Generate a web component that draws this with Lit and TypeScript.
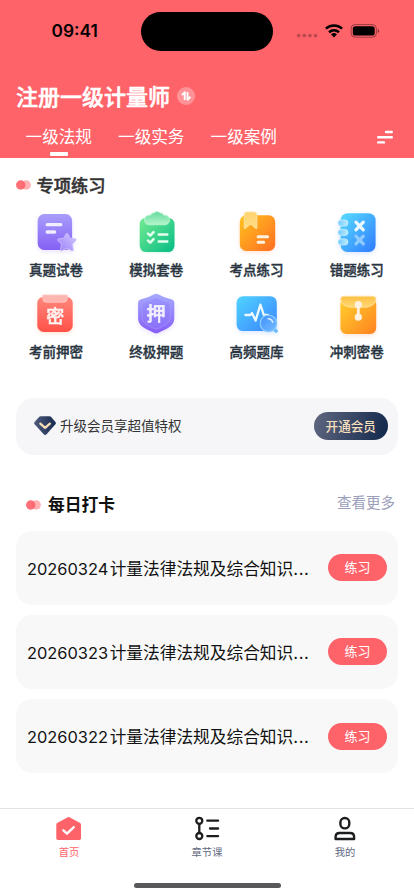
import { LitElement, html, svg, css } from "lit";
import { customElement } from "lit/decorators.js";

const purpleDoc = svg`
  <defs>
    <linearGradient id="a" x1="0" y1="0" x2="0" y2="1"><stop offset="0" stop-color="#a99efb"/><stop offset="1" stop-color="#8560f4"/></linearGradient>
    <linearGradient id="b" x1="1" y1="0" x2="0" y2="1"><stop offset="0" stop-color="#d2c9ff"/><stop offset="1" stop-color="#9c80f8"/></linearGradient>
  </defs>
  <rect x="6.7" y="7" width="34.4" height="36" rx="6.5" fill="url(#a)"/>
  <path d="M16.2 17.7H29.8M16.2 25H23.6" stroke="#f0edff" stroke-width="3.3" stroke-linecap="round"/>
  <path d="M35.4 26.4Q36 25.6 36.6 26.4L39.1 31.2L44.6 32.1Q45.5 32.5 44.9 33.2L41.2 37.2L42.2 42.9Q42.1 44 41.1 43.7L35.9 41.3L30.6 43.6Q29.6 43.9 29.6 42.8L30.5 37.2L26.7 33.2Q26.2 32.3 27.2 32L32.7 31.2Z" fill="url(#b)" stroke="#c5b9ff" stroke-width="1" stroke-linejoin="round"/>`;

const greenList = svg`
  <defs>
    <linearGradient id="a" x1="0" y1="0" x2="1" y2="1"><stop offset="0" stop-color="#76eb92"/><stop offset="1" stop-color="#04bc85"/></linearGradient>
    <linearGradient id="b" x1="0" y1="0" x2="0" y2="1"><stop offset="0" stop-color="#63d99d"/><stop offset="1" stop-color="#b6f6cb"/></linearGradient>
  </defs>
  <rect x="8.7" y="10.7" width="34.8" height="34.4" rx="6.5" fill="url(#a)"/>
  <path d="M18.2 8.2H19.6C20.5 5.8 23 6.2 23.6 5.6C24.6 4.3 27.6 4.3 28.6 5.6C29.3 6.3 31.5 5.8 32.6 8.2H33.8A4.8 4.8 0 0 1 33.8 17.8H18.2A4.8 4.8 0 0 1 18.2 8.2Z" fill="url(#b)" stroke="#b9f6cf" stroke-width=".8"/>
  <g stroke="#e4fff0" stroke-width="2.5" stroke-linecap="round" stroke-linejoin="round" fill="none">
    <path d="M17 26.7L19.2 28.7L22.6 25.2M17 33.6L19.2 35.6L22.6 32.1"/><path d="M27.7 27.4H36.3M27.7 34.4H36.3"/>
  </g>`;

const orangeBook = svg`
  <defs>
    <linearGradient id="a" x1="0" y1="0" x2="1" y2="1"><stop offset="0" stop-color="#ffc41e"/><stop offset="1" stop-color="#ff6d23"/></linearGradient>
    <linearGradient id="b" x1="0" y1="0" x2="0" y2="1"><stop offset="0" stop-color="#ffd36f"/><stop offset="1" stop-color="#ffdd87"/></linearGradient>
  </defs>
  <rect x="7.8" y="8.3" width="35.4" height="35.7" rx="6.5" fill="url(#a)"/>
  <path d="M12.2 21V7.7Q12.2 5 15 5H22.2Q24.9 5 24.9 7.7V21Q24.8 22 24 21.5L19.2 17.6Q18.6 17.2 18 17.6L13.1 21.6Q12.3 22 12.2 21Z" fill="url(#b)" stroke="#ffe6a6" stroke-width=".8"/>
  <path d="M26.1 29.7H35.6M26.1 35.2H31.7" stroke="#fff2e2" stroke-width="3" stroke-linecap="round"/>`;

const blueNotebook = svg`
  <defs>
    <linearGradient id="a" x1="0" y1="0" x2="1" y2="1"><stop offset="0" stop-color="#57dcff"/><stop offset="1" stop-color="#307bff"/></linearGradient>
    <linearGradient id="b" x1="0" y1="0" x2="1" y2="0"><stop offset="0" stop-color="#76c9ff"/><stop offset="1" stop-color="#b9ebff"/></linearGradient>
  </defs>
  <rect x="8.6" y="6.2" width="35" height="38.8" rx="7" fill="url(#a)"/>
  <g fill="url(#b)" stroke="#c6efff" stroke-width=".8">
    <rect x="6" y="13" width="10" height="6" rx="3"/><rect x="6" y="22.4" width="10" height="6" rx="3"/><rect x="6" y="31.9" width="10" height="6" rx="3"/>
  </g>
  <path d="M23.9 15.2L31.3 22.9M31.3 15.2L23.9 22.9" stroke="#ecf9ff" stroke-width="3.2" stroke-linecap="round"/>
  <path d="M23.9 29.2L31.3 36.9M31.3 29.2L23.9 36.9" stroke="#90cbff" stroke-width="3.2" stroke-linecap="round"/>`;

const redSecret = svg`
  <defs>
    <linearGradient id="a" x1="0" y1="0" x2="0" y2="1"><stop offset="0" stop-color="#ff877c"/><stop offset="1" stop-color="#ff5147"/></linearGradient>
  </defs>
  <rect x="6.3" y="7.7" width="35.4" height="35.3" rx="6.5" fill="url(#a)"/>
  <path d="M11.7 6H36.3V9.4Q36.3 13.3 32.4 13.3H15.6Q11.7 13.3 11.7 9.4Z" fill="#ffb6b0" stroke="#ffcac5" stroke-width=".7"/>
  <text x="24.2" y="34" class="glyph">密</text>`;

const purpleShield = svg`
  <defs>
    <linearGradient id="a" x1="0" y1="0" x2="0" y2="1"><stop offset="0" stop-color="#a5aaff"/><stop offset="1" stop-color="#865df8"/></linearGradient>
  </defs>
  <path d="M23.2 5.3Q25.2 4.2 27.2 5.3Q33.5 9 40 10.3Q43.3 11 43.3 14.2V29.5C43.3 37.5 34 40.5 27.5 43.7Q25.2 44.8 22.9 43.7C16.4 40.5 7.1 37.5 7.1 29.5V14.2Q7.1 11 10.4 10.3Q16.9 9 23.2 5.3Z" fill="url(#a)"/>
  <path d="M24 9.1Q25.2 8.4 26.4 9.1Q32 12.3 37.3 13.3Q39.3 13.7 39.3 15.7V28.7C39.3 34.5 32 37 26.5 39.8Q25.2 40.4 23.9 39.8C18.4 37 11.1 34.5 11.1 28.7V15.7Q11.1 13.7 13.1 13.3Q18.4 12.3 24 9.1Z" fill="#8f7ff8" fill-opacity=".4" stroke="#b3acff" stroke-opacity=".6" stroke-width=".7"/>
  <text x="24.9" y="31.8" class="glyph big">押</text>`;

const bluePulse = svg`
  <defs>
    <linearGradient id="a" x1="0" y1="0" x2="1" y2="1"><stop offset="0" stop-color="#50d4ff"/><stop offset="1" stop-color="#3a83ff"/></linearGradient>
    <linearGradient id="b" x1="0" y1="0" x2="1" y2="1"><stop offset="0" stop-color="#3e91fc"/><stop offset="1" stop-color="#76bbff"/></linearGradient>
  </defs>
  <rect x="4.6" y="7.2" width="40.2" height="34.9" rx="6.5" fill="url(#a)"/>
  <path d="M13.4 26H17.5Q19 26 20 24.1L23.6 31.6L28.4 15.6L31.8 26H36" stroke="#ecf9ff" stroke-width="2.3" fill="none" stroke-linecap="round" stroke-linejoin="round"/>
  <path d="M41.7 39.7L44 41.9" stroke="#6bbcff" stroke-width="3.6" stroke-linecap="round"/>
  <circle cx="36.5" cy="34.4" r="8.3" fill="url(#b)" stroke="#8dccff" stroke-width="1.2"/>
  <path d="M36.2 29.8Q39.6 30 40.8 33.3" stroke="#d2edff" stroke-width="1.5" fill="none" stroke-linecap="round"/>`;

const orangeEnvelope = svg`
  <defs>
    <linearGradient id="a" x1="0" y1="0" x2="1" y2="1"><stop offset="0" stop-color="#ffd12d"/><stop offset="1" stop-color="#ff8220"/></linearGradient>
    <linearGradient id="b" x1="0" y1="0" x2="0" y2="1"><stop offset="0" stop-color="#fdbf42"/><stop offset="1" stop-color="#ffda76"/></linearGradient>
  </defs>
  <rect x="8.4" y="9" width="35.8" height="36" rx="6" fill="url(#a)"/>
  <path d="M8.6 10.4Q8.6 7.3 11.8 7.3H40.8Q44 7.3 44 10.4Q43.7 14.5 39.5 16.6Q36.5 18.3 32.5 18.3H20.1Q16.1 18.3 13.1 16.6Q8.9 14.5 8.6 10.4Z" fill="url(#b)" stroke="#ffe5a5" stroke-width=".8"/>
  <g fill="#fff1df"><circle cx="26.3" cy="15.6" r="3.6"/><circle cx="26.3" cy="28.2" r="3.6"/><rect x="24.9" y="16" width="2.8" height="12"/></g>`;

const features = [
  { name: "真题试卷", icon: purpleDoc, glow: "violet" },
  { name: "模拟套卷", icon: greenList, glow: "green" },
  { name: "考点练习", icon: orangeBook, glow: "orange" },
  { name: "错题练习", icon: blueNotebook, glow: "blue" },
  { name: "考前押密", icon: redSecret, glow: "orange" },
  { name: "终极押题", icon: purpleShield, glow: "violet" },
  { name: "高频题库", icon: bluePulse, glow: "blue" },
  { name: "冲刺密卷", icon: orangeEnvelope, glow: "orange" },
];

@customElement("feature-item")
class FeatureItem extends LitElement {
  static properties = { item: { attribute: false } };
  declare item: (typeof features)[number];
  static styles = css`
    :host { display: flex; flex-direction: column; align-items: center; height: 82px; }
    svg { width: 50px; height: 50px; display: block; overflow: visible; }
    .violet { filter: drop-shadow(0 2px 2px rgba(133, 96, 244, .16)); }
    .green { filter: drop-shadow(0 1px 1px rgba(4, 188, 133, .12)); }
    .orange { filter: drop-shadow(0 2px 2px rgba(255, 110, 50, .16)); }
    .blue { filter: drop-shadow(0 2px 2px rgba(48, 123, 255, .16)); }
    .glyph { font: 500 18px "Noto Sans CJK SC", sans-serif; fill: #fff3f1; stroke: #fff3f1; stroke-width: .5px; text-anchor: middle; }
    .big { font-size: 19px; fill: #f4f1ff; stroke: #f4f1ff; }
    .name { font: 500 13.5px/20px "Noto Sans CJK SC", sans-serif; color: #28343f; -webkit-text-stroke: .35px #28343f; margin-top: 2px; white-space: nowrap; }
  `;
  render() {
    return html`<svg viewBox="0 0 50 50" fill="none" class=${this.item.glow}>${this.item.icon}</svg>
      <div class="name">${this.item.name}</div>`;
  }
}

@customElement("app-root")
class AppRoot extends LitElement {
  static styles = css`
    * { box-sizing: border-box; }
    :host { display: flex; flex-direction: column; height: 896px; width: 414px; background: #fff; overflow: hidden;
      font-family: "Inter", "Noto Sans CJK SC", sans-serif; white-space: nowrap; }
    svg { display: block; flex: none; }
    .header { background: #ff636a; height: 158px; flex: none; color: #fff; display: flex; flex-direction: column; }
    .status { height: 62px; display: flex; padding-top: 12px; color: #000; }
    .time { width: 141px; padding-left: 51.5px; font: 600 17.3px/38px "Inter", sans-serif; }
    .island { width: 132px; height: 39px; border-radius: 20px; background: #000; }
    .signals { margin-left: 23px; }
    .course { display: flex; align-items: center; height: 32px; margin: 17px 0 2px; padding-left: 16px; gap: 7px;
      font: 500 22px/32px "Noto Sans CJK SC", sans-serif; -webkit-text-stroke: .5px #fff; }
    .swap { margin-top: 2px; }
    .tabs { display: flex; height: 45px; padding-left: 25.5px; gap: 26px; }
    .tab { display: flex; flex-direction: column; align-items: center; width: 66.5px; font: 400 16.6px/24px "Noto Sans CJK SC", sans-serif; padding-top: 11px; }
    .mark { width: 17.5px; height: 4.5px; background: #fff; margin-top: 3.6px; border-radius: 1px; }
    .menu { margin: 16px 0 0 74px; }
    .section { display: flex; align-items: center; font-family: "Noto Sans CJK SC", sans-serif; }
    .practice { height: 49px; padding: 5px 0 0 16px; gap: 4.5px; font-size: 17.3px; font-weight: 500; color: #333; -webkit-text-stroke: .45px #333; }
    .practice span { margin-top: -2px; }
    .grid { display: grid; grid-template-columns: repeat(4, 100.25px); align-content: start; padding-left: 5.9px; height: 190.5px; }
    .vip { display: flex; align-items: center; height: 57px; margin: 0 16px; padding: 0 10.5px 0 18px; border-radius: 18px; background: #f6f6f9; flex: none; }
    .viptext { font: 400 13.5px/20px "Noto Sans CJK SC", sans-serif; color: #333; margin: -2px 0 0 4px; flex: 1; }
    .open { width: 73.5px; height: 28px; border-radius: 14px; background: linear-gradient(105deg, #606780, #11284b); color: #f6dfbd;
      font: 500 12.6px/27px "Noto Sans CJK SC", sans-serif; text-align: center; }
    .daily { height: 56px; margin-top: 20.5px; padding: 4px 19px 0 26px; gap: 6px; font-size: 16.8px; font-weight: 700; color: #111; }
    .daily span { margin-top: -2px; }
    .daily .more { margin: -4px 0 0 auto; font-size: 14.5px; font-weight: 400; color: #9a9eb9; padding-bottom: 3px; }
    .list { display: flex; flex-direction: column; gap: 10.7px; padding: 0 16px; flex: 1; }
    .card { height: 73.5px; border-radius: 16px; background: #f8f8f8; display: flex; align-items: center; justify-content: space-between; padding: 0 11px; }
    .title { display: flex; align-items: baseline; font: 400 16.7px/24px "Noto Sans CJK SC", sans-serif; color: #111; padding-top: 1px; }
    .date { width: 82.7px; font: 400 16.4px/24px "Inter", sans-serif; }
    .dots { font-family: "Inter", sans-serif; letter-spacing: .6px; }
    .go { width: 59px; height: 27px; border-radius: 14px; background: #ff636a; color: #fff; font: 400 13px/26px "Noto Sans CJK SC", sans-serif; text-align: center; }
    .nav { height: 88px; border-top: 1px solid #e2e2e2; display: flex; flex-direction: column; align-items: center; flex: none; }
    .items { display: flex; width: 414px; height: 74px; }
    .item { width: 138px; display: flex; flex-direction: column; align-items: center; padding-top: 6px; font: 400 10.3px/16px "Noto Sans CJK SC", sans-serif; color: #626982; gap: 1px; }
    .item.on { color: #ff636a; }
    .bar { width: 147px; height: 5px; border-radius: 3px; background: #59595b; }
  `;

  private dots() {
    return html`<svg width="16" height="10" viewBox="0 0 16 10"><circle cx="4.7" cy="5" r="4.7" fill="#ff7077"/><circle cx="10.2" cy="5" r="4.7" fill="#ff636a" opacity=".5"/></svg>`;
  }

  render() {
    return html`
      <div class="header">
        <div class="status">
          <div class="time">09:41</div>
          <div class="island"></div>
          <svg class="signals" width="84" height="38" viewBox="0 0 84 38">
            <g fill="#000" opacity=".26"><circle cx="2.7" cy="23.6" r="1.9"/><circle cx="8.3" cy="23.6" r="1.9"/><circle cx="13.9" cy="23.6" r="1.9"/><circle cx="19.5" cy="23.6" r="1.9"/></g>
            <g fill="none" stroke="#000" stroke-width="2.5"><path d="M29.9 16.6A12 12 0 0 1 46.1 16.6"/><path d="M33 20.2A7.6 7.6 0 0 1 43 20.2"/></g>
            <path d="M35 22.3A4.5 4.5 0 0 1 41 22.3L38 25.5Z" fill="#000"/>
            <rect x="55.1" y="12.6" width="25.3" height="12.6" rx="4" fill="none" stroke="#000" stroke-opacity=".4"/>
            <rect x="56.8" y="14.2" width="21.9" height="9.4" rx="2.6" fill="#000"/>
            <path d="M81.8 17V21Q83.2 20.5 83.2 19Q83.2 17.5 81.8 17Z" fill="#000" opacity=".5"/>
          </svg>
        </div>
        <div class="course">
          <span>注册一级计量师</span>
          <svg class="swap" width="18" height="18" viewBox="0 0 18 18"><circle cx="9" cy="9" r="9" fill="#ff9297"/><path d="M4.9 8.2L7.7 5.2V13M10.5 5V12.7L13.5 9.8" fill="none" stroke="#fff" stroke-width="1.9" stroke-linejoin="round"/></svg>
        </div>
        <div class="tabs">
          <div class="tab">一级法规<i class="mark"></i></div>
          <div class="tab">一级实务</div>
          <div class="tab">一级案例</div>
          <svg class="menu" width="16" height="16" viewBox="0 0 16 16"><path d="M9 3H14.8M1.2 8.2H14.8M1.2 13.4H7" stroke="#fff" stroke-width="2.4" stroke-linecap="round"/></svg>
        </div>
      </div>
      <div class="section practice">${this.dots()}<span>专项练习</span></div>
      <div class="grid">${features.map((f) => html`<feature-item .item=${f}></feature-item>`)}</div>
      <div class="vip">
        <svg width="22" height="20" viewBox="0 0 22 20">
          <defs><linearGradient id="g" x1="0" y1="0" x2="1" y2="0"><stop stop-color="#4f5b7b"/><stop offset="1" stop-color="#172a50"/></linearGradient></defs>
          <path d="M5.3.8Q5.9.3 6.7.3H15.6Q16.4.3 17 .8L21.4 6Q22.3 7.2 21.4 8.3L12.6 18.2Q11.2 19.7 9.7 18.2L.6 8.3Q-.3 7.2.6 6Z" fill="url(#g)"/>
          <path d="M6.3 7.6L11.1 11.8L15.9 7.6" fill="none" stroke="#f9dfb8" stroke-width="2.2" stroke-linecap="round" stroke-linejoin="round"/>
        </svg>
        <span class="viptext">升级会员享超值特权</span>
        <div class="open">开通会员</div>
      </div>
      <div class="section daily">${this.dots()}<span>每日打卡</span><span class="more">查看更多</span></div>
      <div class="list">
        ${["20260324", "20260323", "20260322"].map((d) => html`
          <div class="card"><div class="title"><span class="date">${d}</span><span>计量法律法规及综合知识</span><span class="dots">...</span></div><div class="go">练习</div></div>`)}
      </div>
      <div class="nav">
        <div class="items">
          <div class="item on">
            <svg width="28" height="28" viewBox="0 0 28 28"><path d="M12.8 2.2Q13.7 1.7 14.6 2.2L25.1 8.1Q26 8.7 26 9.7V23.3Q26 25 24.3 25H3Q1.3 25 1.3 23.3V9.7Q1.3 8.7 2.2 8.1Z" fill="#ff636a"/><path d="M8.4 15.3L12 18.6L18.8 12.2" fill="none" stroke="#fff" stroke-width="2.4" stroke-linecap="round" stroke-linejoin="round"/></svg>
            <span>首页</span>
          </div>
          <div class="item">
            <svg width="28" height="28" viewBox="0 0 28 28"><g fill="none" stroke="#1b1d1e" stroke-width="2.3" stroke-linecap="round"><circle cx="6.3" cy="5.8" r="3"/><circle cx="6.3" cy="21" r="3"/><path d="M6.3 8.8V18M14.3 5.7H25.1M17 13.5H25.1M14.3 21.1H25.1"/></g></svg>
            <span>章节课</span>
          </div>
          <div class="item">
            <svg width="28" height="28" viewBox="0 0 28 28"><g fill="none" stroke="#1b1d1e" stroke-width="2.4"><rect x="9.4" y="3" width="8.9" height="10.4" rx="4.4"/><path d="M4.6 24V22Q4.6 18 8.6 18H19.1Q23.1 18 23.1 22V24Z" stroke-linejoin="round"/></g></svg>
            <span>我的</span>
          </div>
        </div>
        <div class="bar"></div>
      </div>`;
  }
}
